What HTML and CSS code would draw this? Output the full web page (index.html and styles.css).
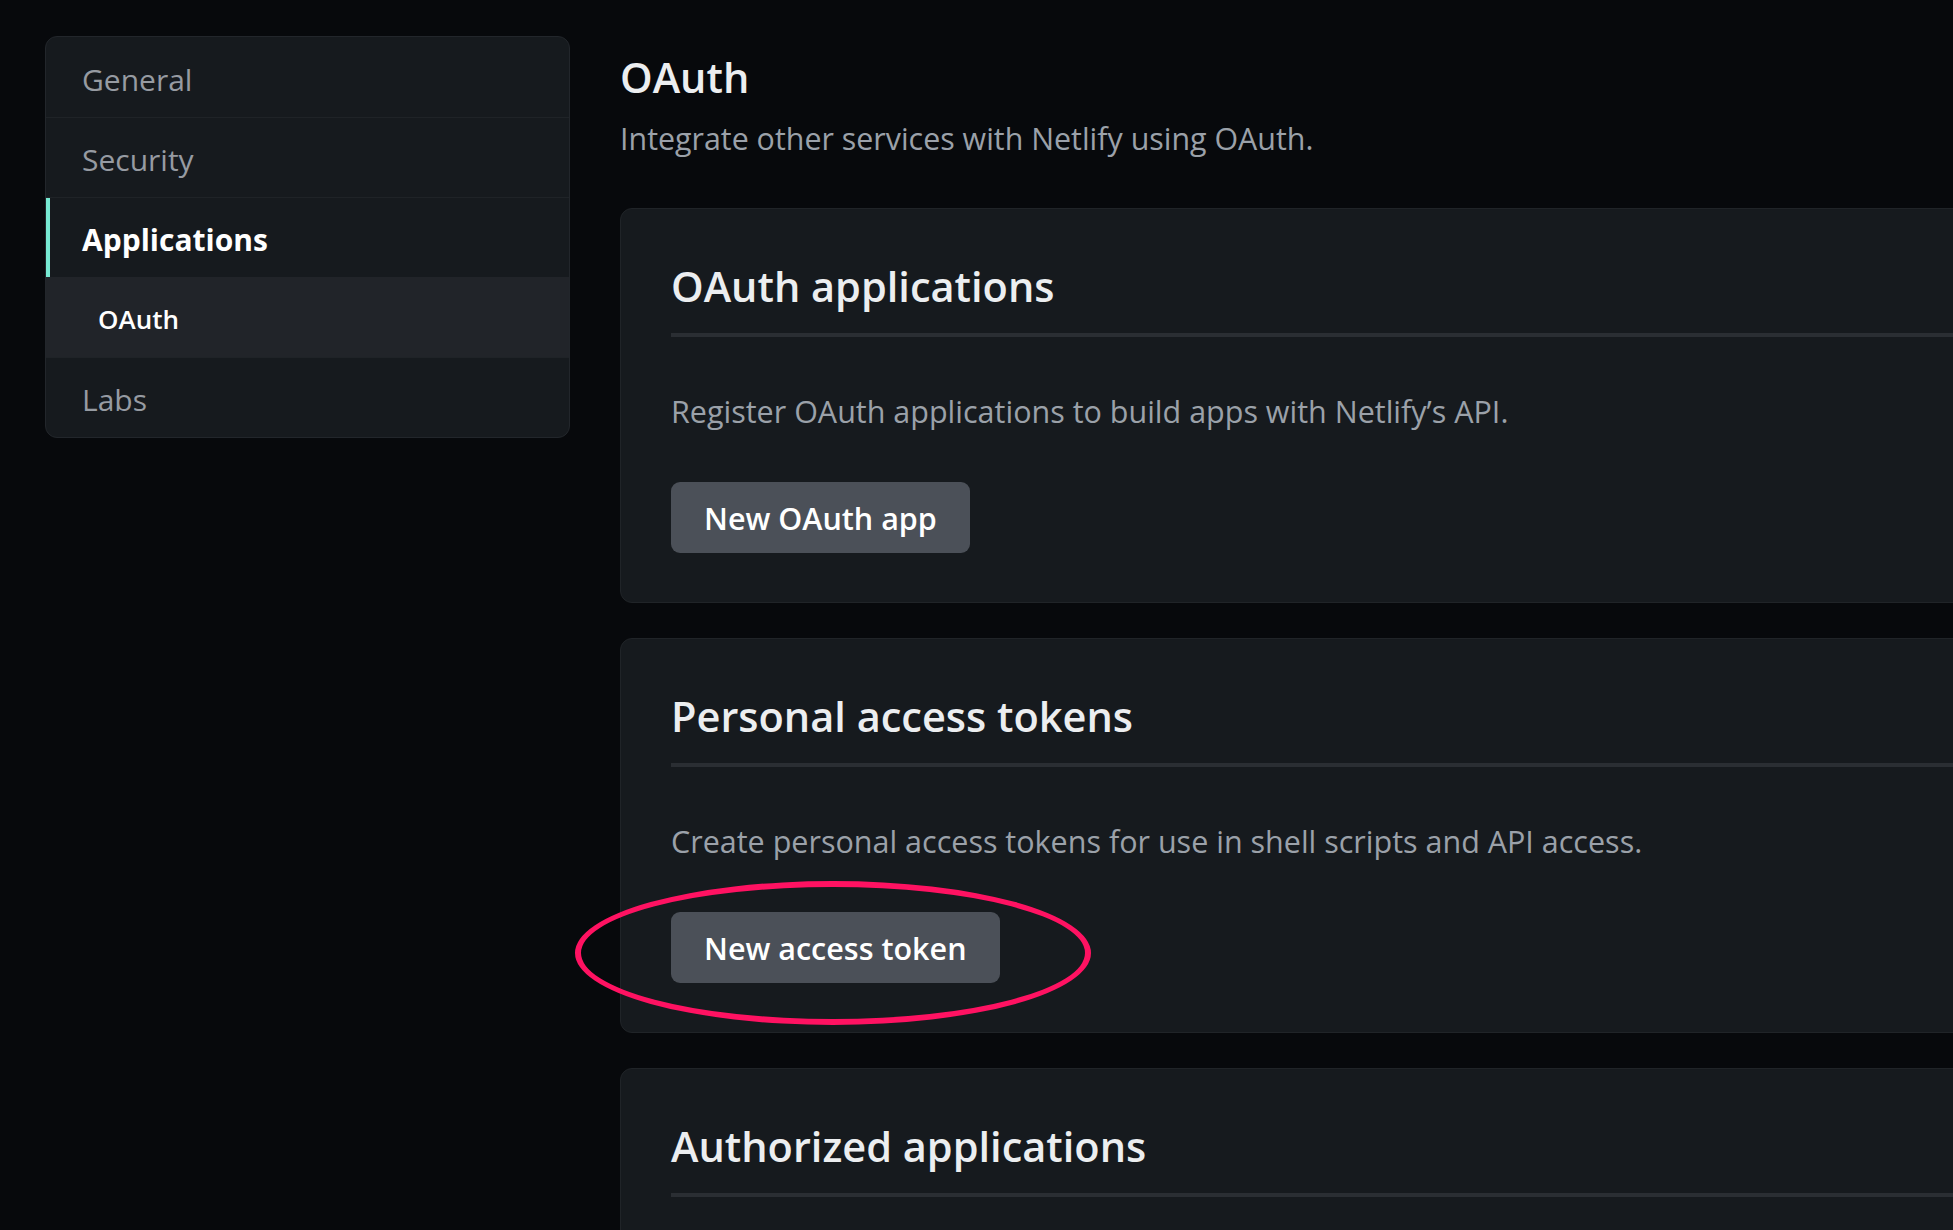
FILE: index.html
```html
<!DOCTYPE html>
<html lang="en">
<head>
<meta charset="utf-8">
<title>OAuth settings</title>
<link rel="stylesheet" href="styles.css">
</head>
<body>
<div class="layout">
  <nav class="sidebar">
    <a class="nav-item">General</a>
    <a class="nav-item">Security</a>
    <a class="nav-item active">Applications</a>
    <a class="nav-item sub">OAuth</a>
    <a class="nav-item">Labs</a>
  </nav>
  <main class="main">
    <header class="page-head">
      <h1 class="page-title">OAuth</h1>
      <p class="page-sub">Integrate other services with Netlify using OAuth.</p>
    </header>
    <section class="card">
      <h2 class="card-title">OAuth applications</h2>
      <p class="card-desc">Register OAuth applications to build apps with Netlify’s API.</p>
      <div class="btn-wrap"><button class="btn">New OAuth app</button></div>
    </section>
    <section class="card">
      <h2 class="card-title">Personal access tokens</h2>
      <p class="card-desc">Create personal access tokens for use in shell scripts and API access.</p>
      <div class="btn-wrap"><button class="btn">New access token</button><span class="highlight"></span></div>
    </section>
    <section class="card">
      <h2 class="card-title">Authorized applications</h2>
    </section>
  </main>
</div>
</body>
</html>
```

FILE: styles.css
```css
html, body {
  margin: 0;
  padding: 0;
  background: #07090c;
  overflow: hidden;
  height: 1230px;
}
body {
  font-family: "Open Sans", "Noto Sans", sans-serif;
  color: #eceef0;
}
.layout {
  display: flex;
  align-items: flex-start;
  gap: 50px;
  padding: 36px 0 0 45px;
}
.sidebar {
  flex: 0 0 525px;
  box-sizing: border-box;
  display: flex;
  flex-direction: column;
  background: #161a1e;
  border: 1px solid #22262b;
  border-radius: 12px;
  overflow: hidden;
}
.nav-item {
  position: relative;
  display: flex;
  align-items: center;
  box-sizing: border-box;
  height: 80px;
  padding: 4px 0 0 36px;
  font-size: 30px;
  color: #969ba2;
  border-top: 1px solid #1f2327;
}
.nav-item:first-child { border-top: none; }
.nav-item.active {
  color: #ffffff;
  font-weight: 700;
}
.nav-item.active::before {
  content: "";
  position: absolute;
  left: 0;
  top: 0;
  bottom: 0;
  width: 4px;
  background: #76e9d2;
}
.nav-item.sub {
  background: #212429;
  color: #ffffff;
  font-weight: 600;
  font-size: 26px;
  padding-left: 52px;
  border-top: none;
}
.main {
  flex: 0 0 1400px;
  display: flex;
  flex-direction: column;
  gap: 35px;
}
.page-head { margin: 0; }
.page-title {
  margin: 0;
  padding-top: 14px;
  font-size: 41.5px;
  line-height: 54px;
  font-weight: 600;
  color: #eceef0;
}
.page-sub {
  margin: 0;
  padding-top: 15px;
  padding-bottom: 14px;
  font-size: 30.4px;
  line-height: 40px;
  color: #9ba1a9;
}
.card {
  box-sizing: border-box;
  height: 395px;
  padding: 0 50px;
  background: #161a1e;
  border: 1px solid #202428;
  border-radius: 12px;
}
.card-title {
  margin: 0;
  padding-top: 52px;
  padding-bottom: 22px;
  font-size: 41.5px;
  line-height: 50px;
  font-weight: 600;
  color: #eceef0;
  border-bottom: 4px solid #2a2e33;
}
.card-desc {
  margin: 0;
  padding-top: 54px;
  font-size: 30.5px;
  line-height: 40px;
  color: #9ba1a9;
}
.btn-wrap {
  position: relative;
  display: inline-block;
  margin-top: 51px;
}
.btn {
  display: block;
  height: 71px;
  padding: 0 33px;
  border: none;
  border-radius: 9px;
  background: #4b5058;
  color: #ffffff;
  font-family: inherit;
  font-size: 30.5px;
  font-weight: 600;
}
.highlight {
  position: absolute;
  left: -96px;
  top: -31px;
  width: 516px;
  height: 144px;
  box-sizing: border-box;
  border: 6px solid #ff1262;
  border-radius: 50%;
  pointer-events: none;
}
```
